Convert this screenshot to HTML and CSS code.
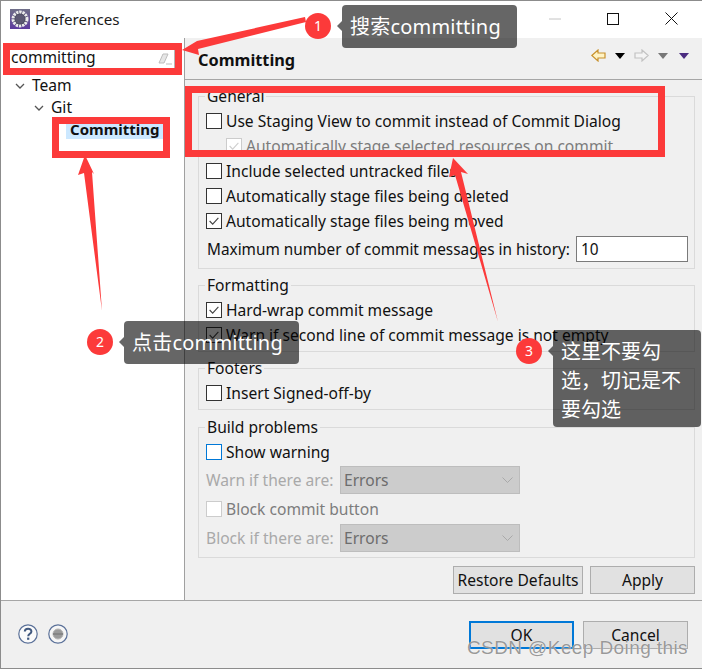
FILE: index.html
```html
<!DOCTYPE html>
<html lang="en">
<head>
<meta charset="utf-8">
<title>Preferences</title>
<link rel="stylesheet" href="styles.css">
</head>
<body>
<div class="window">
  <header class="titlebar">
    <svg class="app-icon" width="20" height="20" viewBox="0 0 20 20"><defs><linearGradient id="ig" x1="0" y1="0" x2="0" y2="1"><stop offset="0" stop-color="#6f6f88"/><stop offset="1" stop-color="#5d3a9e"/></linearGradient></defs><rect width="20" height="20" fill="url(#ig)"/><circle cx="10" cy="10" r="7" fill="#46465c" stroke="#ececec" stroke-width="3" stroke-dasharray="2.4 .8"/><circle cx="10" cy="10" r="4.8" fill="#5c5872"/></svg>
    <span class="title">Preferences</span>
    <div class="win-controls">
      <svg width="12" height="12" viewBox="0 0 12 12"><path d="M0 6h12" stroke="#c4c4c4"/></svg>
      <svg width="12" height="12" viewBox="0 0 12 12"><rect x=".5" y=".5" width="11" height="11" fill="none" stroke="#111"/></svg>
      <svg width="13" height="13" viewBox="0 0 13 13"><path d="M.5.5l12 12M12.5.5l-12 12" stroke="#111" fill="none"/></svg>
    </div>
  </header>
  <div class="panes">
    <aside class="sidebar">
      <div class="search">
        <span class="search-text">committing</span>
        <svg width="14" height="12" viewBox="0 0 14 12"><path d="M1 10l4-9h5l-4 9z" fill="#e6e6e6" stroke="#bdbdbd"/><path d="M8 11h6" stroke="#bdbdbd"/></svg>
      </div>
      <ul class="tree">
        <li class="node team"><svg class="chev" width="10" height="6" viewBox="0 0 10 6"><path d="M1 1l4 4 4-4" fill="none" stroke="#555" stroke-width="1.3"/></svg><span class="node-text">Team</span></li>
        <li class="node git"><svg class="chev" width="10" height="6" viewBox="0 0 10 6"><path d="M1 1l4 4 4-4" fill="none" stroke="#555" stroke-width="1.3"/></svg><span class="node-text">Git</span></li>
        <li class="node leaf"><span class="selected">Committing</span></li>
      </ul>
    </aside>
    <main class="content">
      <div class="page-head">
        <h1>Committing</h1>
        <div class="nav-tools">
          <svg width="15" height="13" viewBox="0 0 15 13"><path d="M.8 6.500L7 1v3h7v5H7v3z" fill="#fff3c4" stroke="#c8912c" stroke-width="1.2"/></svg>
          <span class="tri black"></span>
          <svg class="fwd" width="15" height="13" viewBox="0 0 15 13"><path d="M14.200 6.500L8 1v3H1v5h7v3z" fill="#f4f4f4" stroke="#c2c2c2" stroke-width="1.2"/></svg>
          <span class="tri gray"></span>
          <span class="tri purple"></span>
        </div>
      </div>
      <div class="form">
        <fieldset class="group general">
          <legend>General</legend>
          <label class="row"><span class="box"></span>Use Staging View to commit instead of Commit Dialog</label>
          <label class="row sub off"><span class="box dis"><svg viewBox="0 0 16 16"><path d="M3 8l3.500 3.500L13 4.500" fill="none" stroke="#cfcfcf" stroke-width="1.3"/></svg></span>Automatically stage selected resources on commit</label>
          <label class="row"><span class="box"></span>Include selected untracked files</label>
          <label class="row"><span class="box"></span>Automatically stage files being deleted</label>
          <label class="row"><span class="box"><svg viewBox="0 0 16 16"><path d="M3 8l3.500 3.500L13 4.500" fill="none" stroke="#444" stroke-width="1.3"/></svg></span>Automatically stage files being moved</label>
          <div class="row max"><span>Maximum number of commit messages in history:</span><span class="field">10</span></div>
        </fieldset>
        <fieldset class="group formatting">
          <legend>Formatting</legend>
          <label class="row"><span class="box"><svg viewBox="0 0 16 16"><path d="M3 8l3.500 3.500L13 4.500" fill="none" stroke="#444" stroke-width="1.3"/></svg></span>Hard-wrap commit message</label>
          <label class="row"><span class="box"><svg viewBox="0 0 16 16"><path d="M3 8l3.500 3.500L13 4.500" fill="none" stroke="#444" stroke-width="1.3"/></svg></span>Warn if second line of commit message is not empty</label>
        </fieldset>
        <fieldset class="group footers">
          <legend>Footers</legend>
          <label class="row"><span class="box"></span>Insert Signed-off-by</label>
        </fieldset>
        <fieldset class="group build">
          <legend>Build problems</legend>
          <label class="row show"><span class="box focus"></span>Show warning</label>
          <div class="row pick off-soft"><span class="pick-label">Warn if there are:</span><span class="combo">Errors<svg width="11" height="6" viewBox="0 0 11 6"><path d="M.5.5l5 5 5-5" fill="none" stroke="#a9a9a9"/></svg></span></div>
          <label class="row off"><span class="box dis"></span>Block commit button</label>
          <div class="row pick off-soft"><span class="pick-label">Block if there are:</span><span class="combo">Errors<svg width="11" height="6" viewBox="0 0 11 6"><path d="M.5.5l5 5 5-5" fill="none" stroke="#a9a9a9"/></svg></span></div>
        </fieldset>
        <div class="page-actions">
          <button class="btn restore" type="button">Restore Defaults</button>
          <button class="btn wide" type="button">Apply</button>
        </div>
      </div>
    </main>
  </div>
  <footer class="dialog-foot">
    <div class="foot-icons">
      <svg width="20" height="20" viewBox="0 0 20 20"><circle cx="10" cy="10" r="9.2" fill="#fbfbfb" stroke="#5b7199" stroke-width="1.2"/><path d="M6.800 7.600C6.800 3.900 13.400 3.900 13.400 7.400c0 2.400-3.200 2.400-3.200 4.900" fill="none" stroke="#41597f" stroke-width="2"/><rect x="9.100" y="13.600" width="2.200" height="2.200" fill="#41597f"/></svg>
      <svg width="20" height="20" viewBox="0 0 20 20"><circle cx="10" cy="10" r="9.200" fill="#f6f6f6" stroke="#5b7199" stroke-width="1.2"/><circle cx="10" cy="10" r="5" fill="#9a9a9a" stroke="#b5b5b5"/><rect x="5" y="9" width="10" height="2" fill="#858585"/></svg>
    </div>
    <div class="foot-buttons">
      <button class="btn wide default" type="button">OK</button>
      <button class="btn wide" type="button">Cancel</button>
    </div>
  </footer>
</div>

<div class="annotations">
  <svg class="marks" width="702" height="669" viewBox="0 0 702 669">
    <g fill="#fc3a3a">
      <path d="M305 17L197 41 182 50 199 55 198 49 306 22z" />
      <path d="M85 155L78 175 84 173 102 311 92 172 94 174z" />
      <path d="M453 158L449 177 455 175 498 322 461 172 468 174z" />
    </g>
    <g fill="none" stroke="#fc3a3a" stroke-width="7">
      <rect x="6.500" y="46.500" width="172" height="25"/>
      <rect x="55.500" y="120.500" width="111" height="34"/>
      <rect x="188.500" y="89.500" width="473" height="64"/>
    </g>
  </svg>
  <span class="badge b1">1</span>
  <span class="tip t1">搜索committing</span>
  <span class="badge b2">2</span>
  <span class="tip t2">点击committing</span>
  <span class="badge b3">3</span>
  <span class="tip t3">这里不要勾选，切记是不要勾选</span>
  <span class="watermark">CSDN @Keep Doing this</span>
</div>
</body>
</html>
```

FILE: styles.css
```css
* { box-sizing: border-box; }
html, body { margin: 0; padding: 0; }
body {
  width: 702px;
  height: 669px;
  position: relative;
  overflow: hidden;
  font: 15.6px/20px "Noto Sans", "Noto Sans CJK SC", sans-serif;
  color: #111;
  background: #fff;
}
.window {
  width: 702px;
  height: 669px;
  display: flex;
  flex-direction: column;
  border: 1px solid #8c8c8c;
  border-right: 0;
  background: #f0f0f0;
}

/* title bar */
.titlebar {
  height: 37px;
  flex: none;
  display: flex;
  align-items: center;
  padding: 0 0 2px 9px;
  background: #fff;
}
.app-icon { margin-right: 5px; }
.title { font-size: 15.2px; color: #1a1a1a; }
.win-controls {
  margin-left: auto;
  display: flex;
  align-items: center;
  gap: 46px;
  padding-right: 24px;
}

/* panes */
.panes { flex: 1; display: flex; min-height: 0; }
.sidebar {
  width: 184px;
  flex: none;
  background: #fff;
  border-right: 1px solid #a0a0a0;
  padding-top: 9px;
}
.search {
  margin: 0 9px 0 8px;
  height: 23px;
  display: flex;
  align-items: center;
  justify-content: space-between;
  padding: 0 2px 0 1px;
  border: 1px solid #b5b5b5;
}
.search-text { margin-top: -3px; }
.tree { list-style: none; margin: 5px 0 0; padding: 0; }
.node { height: 22px; display: flex; align-items: center; }
.node-text { margin-top: -2px; }
.chev { margin-right: 7px; }
.team { padding-left: 14px; }
.git { padding-left: 33px; }
.leaf { padding-left: 65px; align-items: flex-start; }
.selected {
  display: block;
  width: 97px;
  height: 19px;
  padding-left: 4px;
  margin-top: 1px;
  background: #cce8ff;
  font-size: 15px;
  font-weight: 700;
  line-height: 19px;
}

/* right page */
.content { flex: 1; display: flex; flex-direction: column; min-width: 0; }
.page-head {
  height: 42px;
  flex: none;
  display: flex;
  align-items: center;
  padding: 0 13px;
  border-bottom: 1px solid #a6a6a6;
}
.page-head h1 { margin: 3px 0 0; font-size: 16.3px; font-weight: 700; line-height: 20px; }
.nav-tools { margin: 0 0 6px auto; display: flex; align-items: center; }
.fwd { margin-left: 9px; }
.tri {
  width: 0;
  height: 0;
  margin-left: 9px;
  border-style: solid;
  border-width: 6px 5px 0;
  border-color: #000 transparent transparent;
}
.tri.gray { border-top-color: #777; }
.tri.purple { border-top-color: #4b2c80; margin-left: 11px; }

.form { padding: 6px 7px 0 13px; }
.group {
  margin: 0 0 6px;
  padding: 2px 6px 0 7px;
  border: 1px solid #dadada;
  min-width: 0;
}
.group legend { margin-left: -1px; padding: 0 2px; line-height: 20px; height: 20px; color: #111; }
.row { display: flex; align-items: center; height: 25px; }
.box {
  width: 16px;
  height: 16px;
  flex: none;
  margin-right: 4px;
  background: #fff;
  border: 1px solid #333;
}
.box svg { display: block; width: 14px; height: 14px; }
.box.dis { border-color: #cccccc; }
.box.focus { border-color: #0078d7; }
.sub { padding-left: 20px; }
.off { color: #7c7c7c; }
.general { height: 183px; }
.general .max { height: 26px; margin-top: 3px; padding-left: 1px; justify-content: space-between; font-size: 15.35px; }
.field {
  width: 112px;
  height: 26px;
  padding-left: 4px;
  line-height: 24px;
  background: #fff;
  border: 1px solid #7a7a7a;
}
.formatting { height: 77px; }
.footers { height: 52px; margin-bottom: 7px; }
.build { height: 141px; padding-top: 2px; }
.build .show { height: 26px; }
.build .pick { height: 28px; }
.build .show + .pick { margin-top: 1px; }
.build .off { height: 30px; }
.off-soft { color: #a9a9a9; }
.pick-label { width: 134px; flex: none; }
.combo {
  width: 180px;
  height: 28px;
  display: flex;
  align-items: center;
  justify-content: space-between;
  padding: 0 6px 0 3px;
  background: #cccccc;
  border: 1px solid #bdbdbd;
  color: #6d6d6d;
}
.page-actions { display: flex; justify-content: flex-end; gap: 7px; margin-top: 8px; }
.btn {
  height: 28px;
  padding: 0;
  font: inherit;
  color: #111;
  background: #e1e1e1;
  border: 1px solid #adadad;
}
.restore { width: 130px; }
.wide { width: 105px; }
.default { border: 2px solid #0078d7; }

/* dialog footer */
.dialog-foot {
  height: 68px;
  flex: none;
  display: flex;
  align-items: flex-start;
  justify-content: space-between;
  padding: 20px 14px 0 17px;
  border-top: 1px solid #a6a6a6;
}
.foot-icons { display: flex; gap: 10px; padding-top: 3px; }
.foot-buttons { display: flex; gap: 9px; }

/* screenshot annotations on top of the dialog */
.annotations { position: absolute; inset: 0; pointer-events: none; }
.marks { position: absolute; left: 0; top: 0; }
.badge {
  position: absolute;
  width: 26px;
  height: 26px;
  border-radius: 50%;
  background: #fc3a3a;
  color: #fff;
  font-size: 14px;
  line-height: 26px;
  text-align: center;
}
.b1 { left: 305px; top: 13px; }
.b2 { left: 87px; top: 329px; }
.b3 { left: 516px; top: 338px; }
.tip {
  position: absolute;
  padding: 0 8px;
  background: rgba(0, 0, 0, .6);
  border-radius: 4px;
  color: #fff;
  font-size: 20px;
  line-height: 29px;
  letter-spacing: .2px;
}
.tip::before {
  content: "";
  position: absolute;
  left: -5px;
  top: 16px;
  border-style: solid;
  border-width: 5px 5px 5px 0;
  border-color: transparent rgba(0, 0, 0, .6) transparent transparent;
}
.t1 { left: 342px; top: 5px; width: 175px; height: 43px; padding-top: 7px; }
.t2 { left: 124px; top: 321px; width: 175px; height: 43px; padding-top: 7px; }
.t3 { left: 553px; top: 330px; width: 148px; height: 97px; padding-top: 7px; letter-spacing: 0; }
.watermark {
  position: absolute;
  left: 467px;
  top: 635px;
  font: 19px/26px "Liberation Sans", sans-serif;
  letter-spacing: .4px;
  color: rgba(120, 120, 120, .75);
  text-shadow: 0 0 1px #fff;
  white-space: nowrap;
}
```
